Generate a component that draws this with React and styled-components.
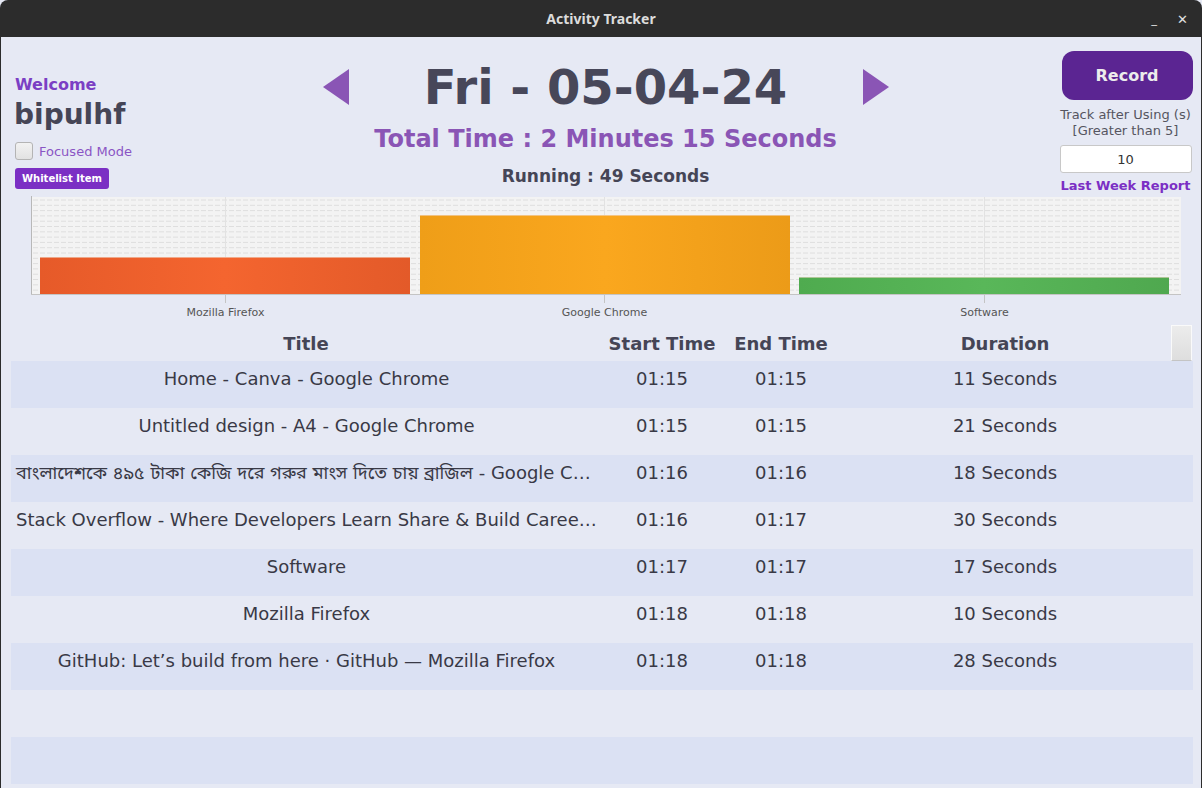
import React from 'react';
import styled, { createGlobalStyle } from 'styled-components';

const Global = createGlobalStyle`
  html, body { margin: 0; padding: 0; background: #e6e9f4; }
  body { font-family: "DejaVu Sans", "Noto Sans", sans-serif; }
  * { box-sizing: border-box; }
`;

const Window = styled.div`
  width: 1202px;
  height: 788px;
  display: flex;
  flex-direction: column;
  overflow: hidden;
  background: #e6e9f4;
`;

const TitleBar = styled.div`
  height: 37px;
  flex: none;
  background: #2c2c2c;
  border-radius: 8px 8px 0 0;
  display: flex;
  align-items: center;
  justify-content: center;
  position: relative;
  color: #dcdcdc;
  font-family: "Noto Sans", "DejaVu Sans", sans-serif;
  font-weight: 700;
  font-size: 14px;
`;

const WinButtons = styled.div`
  position: absolute;
  right: 14px;
  top: 0;
  height: 37px;
  display: flex;
  align-items: center;
  gap: 20px;
  color: #e0e0e0;
  font-size: 13px;
  font-weight: 400;
`;

const Body = styled.div`
  flex: 1;
  display: flex;
  flex-direction: column;
  border-left: 1px solid #2c2c2c;
  border-right: 1px solid #2c2c2c;
`;

const Header = styled.div`
  display: flex;
  height: 159px;
  padding: 14px 9px 0 14px;
`;

const LeftPanel = styled.div`
  width: 137px;
  display: flex;
  flex-direction: column;
  align-items: flex-start;
  padding-top: 24px;
`;

const Welcome = styled.div`
  color: #7b3fc4;
  font-weight: 700;
  font-size: 16px;
  line-height: 20px;
`;

const UserName = styled.div`
  color: #454556;
  font-weight: 700;
  font-size: 28px;
  line-height: 34px;
  margin: 3px 0 0 -1px;
`;

const CheckRow = styled.label`
  display: flex;
  align-items: center;
  gap: 6px;
  margin-top: 10px;
  color: #8a55c4;
  font-size: 13px;
`;

const CheckBox = styled.span`
  width: 18px;
  height: 18px;
  border: 1px solid #b4b4b4;
  border-radius: 3px;
  background: linear-gradient(#f2f2f2, #e2e2e2);
`;

const SmallButton = styled.button`
  margin-top: 8px;
  height: 21px;
  width: 94px;
  padding: 0;
  border: none;
  border-radius: 3px;
  background: #7b2fc4;
  color: #fff;
  font-family: "DejaVu Sans", sans-serif;
  font-weight: 700;
  font-size: 10px;
`;

const Center = styled.div`
  flex: 1;
  display: flex;
  flex-direction: column;
  align-items: center;
  padding-top: 4px;
`;

const DateRow = styled.div`
  display: flex;
  align-items: center;
`;

const Arrow = styled.div`
  width: 0;
  height: 0;
  border-top: 18px solid transparent;
  border-bottom: 18px solid transparent;
  ${p => p.left ? 'border-right: 26px solid #8a55b5;' : 'border-left: 26px solid #8a55b5;'}
`;

const DateText = styled.div`
  width: 514px;
  text-align: center;
  color: #474759;
  font-weight: 700;
  font-size: 48px;
  line-height: 64px;
`;

const TotalTime = styled.div`
  color: #8a55b5;
  font-weight: 700;
  font-size: 24px;
  line-height: 30px;
  margin-top: 5px;
`;

const Running = styled.div`
  color: #454556;
  font-weight: 700;
  font-size: 17px;
  line-height: 22px;
  margin-top: 11px;
`;

const RightPanel = styled.div`
  width: 133px;
  display: flex;
  flex-direction: column;
  align-items: center;
`;

const RecordButton = styled.button`
  width: 131px;
  height: 49px;
  margin-left: 3px;
  border: none;
  border-radius: 12px;
  background: #5b2592;
  color: #ececec;
  font-family: "DejaVu Sans", sans-serif;
  font-weight: 700;
  font-size: 16px;
`;

const Hint = styled.div`
  margin-top: 7px;
  color: #555560;
  font-size: 13px;
  line-height: 16px;
  text-align: center;
  white-space: nowrap;
`;

const NumberInput = styled.div`
  margin-top: 6px;
  width: 132px;
  height: 28px;
  border: 1px solid #c8c8c8;
  border-radius: 3px;
  background: #fff;
  display: flex;
  align-items: center;
  justify-content: center;
  color: #333;
  font-size: 13px;
`;

const LinkText = styled.div`
  margin-top: 5px;
  color: #7b2fc4;
  font-weight: 700;
  font-size: 13px;
  line-height: 16px;
`;

const ChartWrap = styled.div`
  padding-left: 30px;
  height: 129px;
`;

const Table = styled.div`
  margin: 0 8px 0 10px;
  display: flex;
  flex-direction: column;
`;

const Cols = styled.div`
  display: grid;
  grid-template-columns: 590px 122px 116px 332px 22px;
  align-items: center;
  height: ${p => p.head ? 36 : 47}px;
  background: ${p => p.shade ? '#dbe1f3' : 'transparent'};
`;

const HeadCell = styled.div`
  text-align: center;
  color: #454556;
  font-weight: 700;
  font-size: 18px;
  padding-top: 1px;
`;

const Cell = styled.div`
  text-align: center;
  color: #393946;
  font-size: 18px;
  line-height: 22px;
  padding-bottom: 12px;
  white-space: nowrap;
  overflow: hidden;
  text-overflow: ellipsis;
  padding-left: ${p => p.title ? 5 : 0}px;
  padding-right: ${p => p.title ? 4 : 0}px;
  font-family: "DejaVu Sans", "Noto Sans Bengali", "Noto Sans", sans-serif;
`;

const ScrollThumb = styled.div`
  width: 21px;
  height: 36px;
  border: 1px solid #fafafa;
  border-bottom-color: #c4c4c4;
  background: linear-gradient(#ececec, #dedede);
  align-self: start;
`;

const bars = [
  { label: 'Mozilla Firefox', x: 9, top: 61, c: ['#e65a29', '#f4652f', '#e35a29'] },
  { label: 'Google Chrome', x: 389, top: 19, c: ['#ef9e18', '#faa71e', '#ec9b18'] },
  { label: 'Software', x: 768, top: 81, c: ['#4fab4f', '#59b759', '#4fa84f'] },
];

function Chart() {
  const lines = [];
  for (let y = 4; y < 98; y += 5.3) lines.push(y);
  return (
    <svg width="1160" height="129" viewBox="0 0 1160 129">
      <defs>
        {bars.map((b, i) => (
          <linearGradient key={i} id={'g' + i} x1="0" x2="1" y1="0" y2="0">
            <stop offset="0" stopColor={b.c[0]} />
            <stop offset="0.5" stopColor={b.c[1]} />
            <stop offset="1" stopColor={b.c[2]} />
          </linearGradient>
        ))}
      </defs>
      <rect x="1" y="1" width="1149" height="98" fill="#f3f3f3" />
      {lines.map((y, i) => (
        <line key={i} x1="2" x2="1150" y1={y} y2={y} stroke="#dedede" strokeDasharray="5 2" />
      ))}
      {[194, 573, 953].map(x => (
        <line key={x} x1={x + 0.5} x2={x + 0.5} y1="1" y2="99" stroke="#e2e2e2" />
      ))}
      {bars.map((b, i) => (
        <g key={i}>
          <rect x={b.x} y={b.top} width="370" height={99 - b.top} fill={'url(#g' + i + ')'} />
          <line x1={b.x} x2={b.x + 370} y1={b.top + 0.5} y2={b.top + 0.5} stroke="#f0d8c8" strokeOpacity="0.6" />
        </g>
      ))}
      <line x1="0.5" x2="0.5" y1="0" y2="99" stroke="#b8b8b8" />
      <line x1="0" x2="1150" y1="98.5" y2="98.5" stroke="#c4c4c4" />
      {[194, 573, 953].map((x, i) => (
        <g key={i}>
          <line x1={x + 0.5} x2={x + 0.5} y1="99" y2="107" stroke="#c4c4c4" />
          <text x={x + 0.5} y="120" textAnchor="middle" fontSize="11" fill="#555" fontFamily="DejaVu Sans, sans-serif">
            {bars[i].label}
          </text>
        </g>
      ))}
    </svg>
  );
}

const rows = [
  ['Home - Canva - Google Chrome', '01:15', '01:15', '11 Seconds'],
  ['Untitled design - A4 - Google Chrome', '01:15', '01:15', '21 Seconds'],
  ['বাংলাদেশকে ৪৯৫ টাকা কেজি দরে গরুর মাংস দিতে চায় ব্রাজিল - Google Chrome', '01:16', '01:16', '18 Seconds'],
  ['Stack Overflow - Where Developers Learn Share & Build Careers - Mozilla Firefox', '01:16', '01:17', '30 Seconds'],
  ['Software', '01:17', '01:17', '17 Seconds'],
  ['Mozilla Firefox', '01:18', '01:18', '10 Seconds'],
  ['GitHub: Let’s build from here · GitHub — Mozilla Firefox', '01:18', '01:18', '28 Seconds'],
  null,
  null,
];

export default function App() {
  return (
    <Window>
      <Global />
      <TitleBar>
        Activity Tracker
        <WinButtons>
          <span>_</span>
          <span>✕</span>
        </WinButtons>
      </TitleBar>
      <Body>
        <Header>
          <LeftPanel>
            <Welcome>Welcome</Welcome>
            <UserName>bipulhf</UserName>
            <CheckRow>
              <CheckBox />
              Focused Mode
            </CheckRow>
            <SmallButton>Whitelist Item</SmallButton>
          </LeftPanel>
          <Center>
            <DateRow>
              <Arrow left />
              <DateText>Fri - 05-04-24</DateText>
              <Arrow />
            </DateRow>
            <TotalTime>Total Time : 2 Minutes 15 Seconds</TotalTime>
            <Running>Running : 49 Seconds</Running>
          </Center>
          <RightPanel>
            <RecordButton>Record</RecordButton>
            <Hint>Track after Using (s)<br />[Greater than 5]</Hint>
            <NumberInput>10</NumberInput>
            <LinkText>Last Week Report</LinkText>
          </RightPanel>
        </Header>
        <ChartWrap>
          <Chart />
        </ChartWrap>
        <Table>
          <Cols head>
            <HeadCell>Title</HeadCell>
            <HeadCell>Start Time</HeadCell>
            <HeadCell>End Time</HeadCell>
            <HeadCell>Duration</HeadCell>
            <ScrollThumb />
          </Cols>
          {rows.map((r, i) => (
            <Cols key={i} shade={i % 2 === 0}>
              {r && r.map((v, j) => <Cell key={j} title={j === 0 ? 1 : 0}>{v}</Cell>)}
            </Cols>
          ))}
        </Table>
      </Body>
    </Window>
  );
}
